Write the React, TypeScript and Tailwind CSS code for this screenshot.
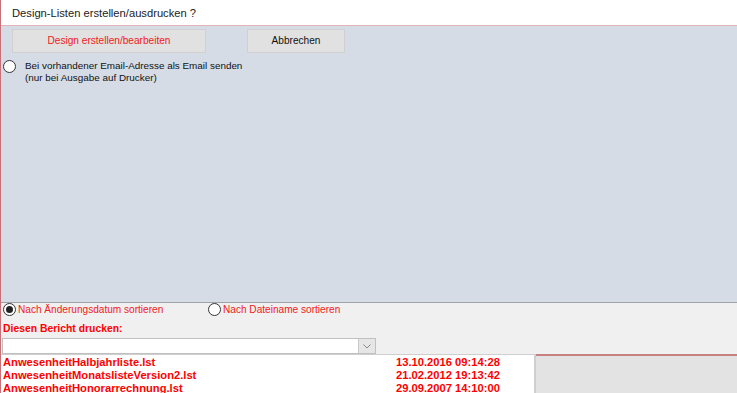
import React from "react";

const Radio = ({ checked }: { checked?: boolean }) => (
  <span className="flex h-[13px] w-[13px] shrink-0 items-center justify-center rounded-full border border-[#333] bg-white">
    {checked && <span className="h-[7px] w-[7px] rounded-full bg-[#222]" />}
  </span>
);

export default function App() {
  const rows = [
    ["AnwesenheitHalbjahrliste.lst", "13.10.2016 09:14:28"],
    ["AnwesenheitMonatslisteVersion2.lst", "21.02.2012 19:13:42"],
    ["AnwesenheitHonorarrechnung.lst", "29.09.2007 14:10:00"],
  ];
  return (
    <div className="flex h-[393px] w-[737px] flex-col overflow-hidden bg-white font-['Liberation_Sans',sans-serif] text-[11px]">
      <div className="h-px w-full bg-[#c87078]" />
      <div className="flex flex-1 flex-col border-l border-[#c87078]">
        <div className="flex h-[25px] items-center pl-[11px] pt-[2px] text-[11.2px] text-[#222]">
          Design-Listen erstellen/ausdrucken ?
        </div>
        <div className="h-px bg-[#e2b4b8]" />
        <div className="flex h-[276px] flex-col bg-[#d5dce5]">
          <div className="flex gap-[41px] pl-[11px] pt-[3px]">
            <div className="flex h-[24px] w-[194px] items-center justify-center border border-[#d0d0d0] bg-[#e1e1e1] text-[10.1px] text-[#f02020]">
              Design erstellen/bearbeiten
            </div>
            <div className="flex h-[24px] w-[98px] items-center justify-center border border-[#d0d0d0] bg-[#e1e1e1] text-[10.1px] text-[#111]">
              Abbrechen
            </div>
          </div>
          <div className="flex items-start gap-[9px] pl-[2px] pt-[6px]">
            <div className="pt-[1px]">
              <Radio />
            </div>
            <div className="pt-[1px] text-[9.9px] leading-[12px] text-[#111]">
              <div>Bei vorhandener Email-Adresse als Email senden</div>
              <div>(nur bei Ausgabe auf Drucker)</div>
            </div>
          </div>
        </div>
        <div className="h-px bg-[#a0a4a8]" />
        <div className="flex h-[51px] flex-col bg-[#f0f0f0]">
          <div className="flex h-[13px] items-center pl-[2px] text-[10.1px] text-[#f02020]">
            <div className="flex w-[205px] items-center gap-[2px]">
              <Radio checked />
              <span>Nach Änderungsdatum sortieren</span>
            </div>
            <div className="flex items-center gap-[2px]">
              <Radio />
              <span>Nach Dateiname sortieren</span>
            </div>
          </div>
          <div className="pl-[2px] pt-[6px] text-[10.4px] font-bold leading-[13px] text-[#ff0000]">
            Diesen Bericht drucken:
          </div>
          <div className="ml-[1px] mt-[3px] flex h-[16px] w-[374px] border border-[#c0c0c0] bg-white">
            <div className="flex-1" />
            <div className="flex w-[17px] items-center justify-center border-l border-[#c8c8c8] bg-[#e6e6e6]">
              <svg width="8" height="5" viewBox="0 0 8 5">
                <path d="M0.5 0.5 L4 4 L7.5 0.5" fill="none" stroke="#888" strokeWidth="1" />
              </svg>
            </div>
          </div>
        </div>
        <div className="flex flex-1">
          <div className="w-[535px] border-r-2 border-t border-[#cfcfcf] bg-white pl-[2px] pt-[1px] text-[11.2px] font-bold leading-[13px] text-[#ff0000]">
            {rows.map(([n, d]) => (
              <div key={n} className="flex">
                <div className="w-[393px]">{n}</div>
                <div>{d}</div>
              </div>
            ))}
          </div>
          <div className="flex flex-1 flex-col bg-[#e3e3e3]">
            <div className="h-[2px] bg-[#c88080]" />
          </div>
        </div>
      </div>
    </div>
  );
}
